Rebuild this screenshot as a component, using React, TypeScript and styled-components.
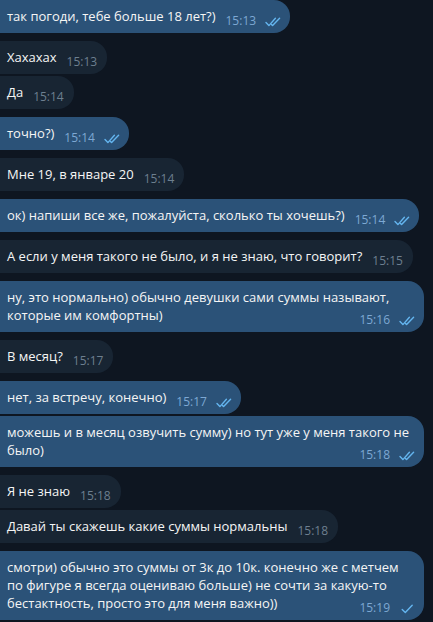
import styled, { createGlobalStyle } from "styled-components"

type Msg = {
  out: boolean
  text: string
  time: string
  checks?: 1 | 2
}

const messages: Msg[] = [
  { out: true, text: "так погоди, тебе больше 18 лет?)", time: "15:13", checks: 2 },
  { out: false, text: "Хахахах", time: "15:13" },
  { out: false, text: "Да", time: "15:14" },
  { out: true, text: "точно?)", time: "15:14", checks: 2 },
  { out: false, text: "Мне 19, в январе 20", time: "15:14" },
  { out: true, text: "ок) напиши все же, пожалуйста, сколько ты хочешь?)", time: "15:14", checks: 2 },
  { out: false, text: "А если у меня такого не было, и я не знаю, что говорит?", time: "15:15" },
  {
    out: true,
    text: "ну, это нормально) обычно девушки сами суммы называют, которые им комфортны)",
    time: "15:16",
    checks: 2,
  },
  { out: false, text: "В месяц?", time: "15:17" },
  { out: true, text: "нет, за встречу, конечно)", time: "15:17", checks: 2 },
  {
    out: true,
    text: "можешь и в месяц озвучить сумму) но тут уже у меня такого не было)",
    time: "15:18",
    checks: 2,
  },
  { out: false, text: "Я не знаю", time: "15:18" },
  { out: false, text: "Давай ты скажешь какие суммы нормальны", time: "15:18" },
  {
    out: true,
    text: "смотри) обычно это суммы от 3к до 10к. конечно же с метчем по фигуре я всегда оцениваю больше) не сочти за какую-то бестактность, просто это для меня важно))",
    time: "15:19",
    checks: 1,
  },
]

const Checks = ({ count }: { count: 1 | 2 }) => (
  <CheckIcon width="17" height="10" viewBox="0 0 17 10">
    {count === 2 ? (
      <>
        <path d="M1 5.6 L3.9 8.6 L10.4 1.2" />
        <path d="M6.4 7.4 L7.6 8.6 L14.6 1.2" />
      </>
    ) : (
      <path d="M3.2 5.4 L6.3 8.5 L13.2 1.2" />
    )}
  </CheckIcon>
)

export default function App() {
  return (
    <>
      <GlobalStyle />
      <Chat>
        {messages.map((m, i) => {
          const prev = messages[i - 1]
          const sameSender = prev !== undefined && prev.out === m.out
          return (
            <Bubble key={i} $out={m.out} $tight={sameSender}>
              {m.text}
              <Meta>
                <Time $out={m.out}>{m.time}</Time>
                {m.checks && <Checks count={m.checks} />}
              </Meta>
            </Bubble>
          )
        })}
      </Chat>
    </>
  )
}

const GlobalStyle = createGlobalStyle`
  html, body {
    margin: 0;
    padding: 0;
    background: #0e1621;
  }
  body {
    font-family: "Open Sans", "Noto Sans", sans-serif;
    -webkit-font-smoothing: antialiased;
  }
`

const Chat = styled.div`
  min-height: 622px;
  display: flex;
  flex-direction: column;
  align-items: flex-start;
  background: #0e1621;
`

const Bubble = styled.div<{ $out: boolean; $tight: boolean }>`
  display: inline-block;
  box-sizing: border-box;
  max-width: 424px;
  margin-top: ${(p) => (p.$tight ? "2px" : "8px")};
  &:first-child {
    margin-top: 0;
  }
  padding: 7px ${(p) => (p.$out ? "8px" : "10px")} 8px 7px;
  border-radius: 0 16px 16px 0;
  background: ${(p) => (p.$out ? "#2b5278" : "#182533")};
  color: #f5f5f5;
  font-size: 13px;
  line-height: 18px;
`

const Meta = styled.span`
  float: right;
  display: flex;
  align-items: center;
  gap: 9px;
  height: 14px;
  margin: 7px 0 -4px 10px;
`

const Time = styled.span<{ $out: boolean }>`
  font-size: 12px;
  line-height: 14px;
  color: ${(p) => (p.$out ? "#7da8d3" : "#6d7f8f")};
`

const CheckIcon = styled.svg`
  fill: none;
  stroke: #64b5ef;
  stroke-width: 1.4;
  stroke-linecap: round;
  stroke-linejoin: round;
  margin-top: 1px;
`
